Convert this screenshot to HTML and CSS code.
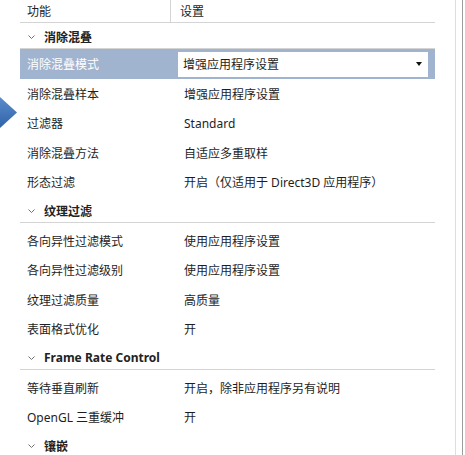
FILE: index.html
```html
<!DOCTYPE html>
<html lang="zh-CN">
<head>
    <meta charset="UTF-8">
    <title>3D 设置</title>
<link rel="stylesheet" href="styles.css">
</head>
<body>
<div class="page">
    <div class="list">
        <div class="head">
            <span class="col_a">功能</span>
            <span class="col_b">设置</span>
        </div>

        <div class="section first">
            <svg class="chevron" width="7" height="4" viewBox="0 0 7 4"><polyline points="0.5,0.5 3.5,3.5 6.5,0.5"/></svg>
            <span>消除混叠</span>
        </div>
        <div class="row selected">
            <span class="col_a">消除混叠模式</span>
            <span class="col_b"><span class="select">增强应用程序设置</span></span>
        </div>
        <div class="row"><span class="col_a">消除混叠样本</span><span class="col_b">增强应用程序设置</span></div>
        <div class="row"><span class="col_a">过滤器</span><span class="col_b">Standard</span></div>
        <div class="row"><span class="col_a">消除混叠方法</span><span class="col_b">自适应多重取样</span></div>
        <div class="row"><span class="col_a">形态过滤</span><span class="col_b">开启（仅适用于 Direct3D 应用程序）</span></div>

        <div class="section">
            <svg class="chevron" width="7" height="4" viewBox="0 0 7 4"><polyline points="0.5,0.5 3.5,3.5 6.5,0.5"/></svg>
            <span>纹理过滤</span>
        </div>
        <div class="row"><span class="col_a">各向异性过滤模式</span><span class="col_b">使用应用程序设置</span></div>
        <div class="row"><span class="col_a">各向异性过滤级别</span><span class="col_b">使用应用程序设置</span></div>
        <div class="row"><span class="col_a">纹理过滤质量</span><span class="col_b">高质量</span></div>
        <div class="row"><span class="col_a">表面格式优化</span><span class="col_b">开</span></div>

        <div class="section">
            <svg class="chevron" width="7" height="4" viewBox="0 0 7 4"><polyline points="0.5,0.5 3.5,3.5 6.5,0.5"/></svg>
            <span>Frame Rate Control</span>
        </div>
        <div class="row"><span class="col_a">等待垂直刷新</span><span class="col_b">开启，除非应用程序另有说明</span></div>
        <div class="row"><span class="col_a">OpenGL 三重缓冲</span><span class="col_b">开</span></div>

        <div class="section">
            <svg class="chevron" width="7" height="4" viewBox="0 0 7 4"><polyline points="0.5,0.5 3.5,3.5 6.5,0.5"/></svg>
            <span>镶嵌</span>
        </div>
    </div>
    <div class="edge"></div>
</div>

<!-- pointer arrow from the screenshot annotation -->
<svg class="pointer" width="18" height="32" viewBox="0 0 18 32">
    <defs>
        <linearGradient id="pointer_fill" x1="0" y1="0" x2="0" y2="1">
            <stop offset="0" stop-color="#5b8dcc"/>
            <stop offset="1" stop-color="#2f62a8"/>
        </linearGradient>
    </defs>
    <polygon points="0,0 17,15.5 0,31" fill="url(#pointer_fill)"/>
</svg>
</body>
</html>
```

FILE: styles.css
```css
body{
    margin: 0;
    background-color: white;
    font-family: 'Noto Sans', 'Noto Sans CJK SC', sans-serif;
    font-size: 12px;
    color: #1e1e1e;
    overflow: hidden;
}

.page{
    display: flex;
    width: 465px;
    height: 455px;
}

.list{
    margin-left: 20px;
    width: 415px;
}

.head{
    display: grid;
    grid-template-columns: 150px 1fr;
    height: 23px;
    box-sizing: border-box;
    border-bottom: 1px solid #d4d4d4;
}
.head span{
    display: flex;
    align-items: center;
}
.head .col_a{
    padding-left: 7px;
}
.head .col_b{
    border-left: 1px solid #d4d4d4;
    padding-left: 9px;
}

.section{
    display: flex;
    align-items: center;
    height: 26px;
    box-sizing: border-box;
    padding-top: 2px;
    border-bottom: 1px solid #d4d4d4;
    margin-bottom: 3px;
    font-weight: bold;
    color: #222222;
}
.section.first{
    margin-bottom: 0;
}
.chevron{
    margin-left: 8px;
    margin-right: 9px;
    fill: none;
    stroke: #707070;
    stroke-width: 1;
}

.row{
    display: grid;
    grid-template-columns: 150px 1fr;
    align-items: center;
    height: 29.5px;
}
.row .col_a{
    padding-left: 7px;
}
.row .col_b{
    padding-left: 14px;
    white-space: nowrap;
}

.selected{
    height: 30px;
    background-color: #a0b4d0;
    color: white;
}
.selected .col_b{
    padding-left: 8px;
}
.select{
    display: flex;
    align-items: center;
    justify-content: space-between;
    width: 250px;
    height: 25px;
    box-sizing: border-box;
    padding-left: 5px;
    padding-right: 6px;
    background-color: white;
    color: #1e1e1e;
}
.select::after{
    content: '';
    border-left: 3px solid transparent;
    border-right: 3px solid transparent;
    border-top: 4px solid #111111;
}

.edge{
    margin-left: 20px;
    width: 6px;
    border-left: 1px solid #dedede;
    border-right: 1px solid #9c9c9c;
}

.pointer{
    position: absolute;
    left: 0;
    top: 97px;
}
```
